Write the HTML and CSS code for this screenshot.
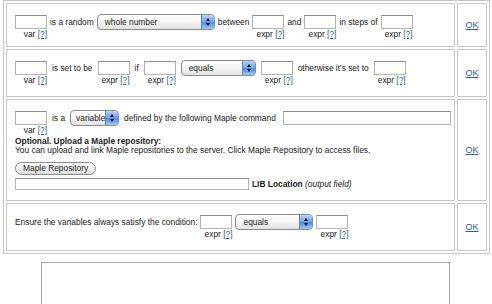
FILE: index.html
```html
<!DOCTYPE html>
<html lang="en">

<head>
  <meta charset="UTF-8">
  <title>Question variables</title>
  <link rel="stylesheet" href="styles.css">
</head>

<body>
  <table class="rules">
    <!-- random number -->
    <tr>
      <td class="rule">
        <div class="rule-body r1">
          <div class="line gap3">
            <div class="field"><input class="box" type="text"><span class="hint">var <a href="#">[?]</a></span></div>
            <span class="txt">is a random</span>
            <span class="pick w118">whole number<span class="knob"></span></span>
            <span class="txt">between</span>
            <div class="field"><input class="box" type="text"><span class="hint">expr <a href="#">[?]</a></span></div>
            <span class="txt">and</span>
            <div class="field"><input class="box" type="text"><span class="hint">expr <a href="#">[?]</a></span></div>
            <span class="txt">in steps of</span>
            <div class="field"><input class="box" type="text"><span class="hint">expr <a href="#">[?]</a></span></div>
          </div>
        </div>
      </td>
      <td class="ok"><a href="#">OK</a></td>
    </tr>

    <!-- conditional -->
    <tr>
      <td class="rule">
        <div class="rule-body r2">
          <div class="line gap5">
            <div class="field"><input class="box" type="text"><span class="hint">var <a href="#">[?]</a></span></div>
            <span class="txt">is set to be</span>
            <div class="field"><input class="box" type="text"><span class="hint">expr <a href="#">[?]</a></span></div>
            <span class="txt">if</span>
            <div class="field"><input class="box" type="text"><span class="hint">expr <a href="#">[?]</a></span></div>
            <span class="pick w75">equals<span class="knob"></span></span>
            <div class="field"><input class="box" type="text"><span class="hint">expr <a href="#">[?]</a></span></div>
            <span class="txt">otherwise it's set to</span>
            <div class="field"><input class="box" type="text"><span class="hint">expr <a href="#">[?]</a></span></div>
          </div>
        </div>
      </td>
      <td class="ok"><a href="#">OK</a></td>
    </tr>

    <!-- maple command -->
    <tr>
      <td class="rule">
        <div class="rule-body r3">
          <div class="line gap5">
            <div class="field"><input class="box" type="text"><span class="hint">var <a href="#">[?]</a></span></div>
            <span class="txt">is a</span>
            <span class="pick w49">variable<span class="knob"></span></span>
            <span class="txt">defined by the following Maple command</span>
            <input class="box wide" type="text">
          </div>
          <div class="upload">
            <b>Optional. Upload a Maple repository:</b><br>
            You can upload and link Maple repositories to the server. Click Maple Repository to access files.
          </div>
          <button class="pill">Maple Repository</button>
          <div class="lib">
            <input class="box lib-box" type="text">
            <span><b>LIB Location</b> <i>(output field)</i></span>
          </div>
        </div>
      </td>
      <td class="ok"><a href="#">OK</a></td>
    </tr>

    <!-- condition -->
    <tr>
      <td class="rule">
        <div class="rule-body r4">
          <div class="line gap3">
            <span class="txt">Ensure the variables always satisfy the condition:</span>
            <div class="field"><input class="box" type="text"><span class="hint">expr <a href="#">[?]</a></span></div>
            <span class="pick w78">equals<span class="knob"></span></span>
            <div class="field"><input class="box" type="text"><span class="hint">expr <a href="#">[?]</a></span></div>
          </div>
        </div>
      </td>
      <td class="ok"><a href="#">OK</a></td>
    </tr>
  </table>

  <div class="preview"></div>
</body>

</html>
```

FILE: styles.css
```css
body {
  margin: 0;
  padding: 0 0 0 3px;
  background-color: white;
  color: #222;
  font-family: "Liberation Sans", Arial, sans-serif;
  font-size: 8.4px;
  overflow: hidden;
}

a {
  color: #2a5db0;
}

.rules {
  width: 487px;
  border: 1px solid #c6c6c6;
  border-spacing: 2px;
}

.rules td {
  border: 1px solid #c6c6c6;
  padding: 0;
  vertical-align: top;
}

.rules td.ok {
  width: 28px;
  text-align: center;
  vertical-align: middle;
  font-size: 9px;
}

.rule-body {
  box-sizing: border-box;
  padding: 11px 0 0 8px;
}

.r1 { height: 42px; }
.r2 { height: 46px; }
.r3 { height: 100px; }
.r4 { height: 46px; }

.line {
  display: flex;
  align-items: flex-start;
}

.gap3 { gap: 3px; }
.gap5 { gap: 5px; }

.field {
  display: flex;
  flex-direction: column;
  align-items: flex-end;
}

.box {
  width: 32px;
  height: 14px;
  margin: 0;
  padding: 0 2px;
  box-sizing: border-box;
  border: 1px solid #b4b4b4;
  border-top-color: #8c8c8c;
  background-color: white;
  font: inherit;
}

.box.wide {
  width: 168px;
  margin-left: 2px;
}

.hint {
  margin-top: 1px;
  line-height: 9px;
  white-space: nowrap;
}

.txt {
  line-height: 14px;
  white-space: nowrap;
}

.pick {
  position: relative;
  height: 16px;
  margin-top: -1px;
  padding-left: 7px;
  box-sizing: border-box;
  border: 1px solid #8a8a8a;
  border-radius: 4px;
  background: linear-gradient(#ffffff, #f4f4f4 50%, #e2e2e2);
  line-height: 14px;
  white-space: nowrap;
  overflow: hidden;
}

.knob {
  position: absolute;
  top: 0;
  right: 0;
  width: 12px;
  height: 14px;
  border-left: 1px solid #5f84bd;
  background: linear-gradient(#b4d4f8, #6aa3ec 50%, #4a8ae2 51%, #9cc8f7);
}

.knob::before,
.knob::after {
  content: "";
  position: absolute;
  left: 4px;
  border-left: 2px solid transparent;
  border-right: 2px solid transparent;
}

.knob::before {
  top: 3px;
  border-bottom: 3px solid #111;
}

.knob::after {
  top: 8px;
  border-top: 3px solid #111;
}

.pick.w118 { width: 118px; }
.pick.w75 { width: 75px; }
.pick.w49 { width: 49px; padding-left: 5px; }
.pick.w78 { width: 78px; }

.upload {
  margin-top: 2px;
  line-height: 9px;
}

.pill {
  display: block;
  margin-top: 7px;
  height: 13px;
  padding: 0 7px;
  border: 1px solid #8a8a8a;
  border-radius: 7px;
  background: linear-gradient(#ffffff, #f0f0f0 50%, #dcdcdc);
  color: #222;
  font: inherit;
  line-height: 11px;
}

.lib {
  display: flex;
  align-items: center;
  gap: 3px;
  margin-top: 3px;
}

.box.lib-box {
  width: 234px;
  height: 12px;
}

.preview {
  width: 409px;
  height: 50px;
  margin: 8px 0 0 38px;
  box-sizing: border-box;
  border: 1px solid #a4a4a4;
}
```
